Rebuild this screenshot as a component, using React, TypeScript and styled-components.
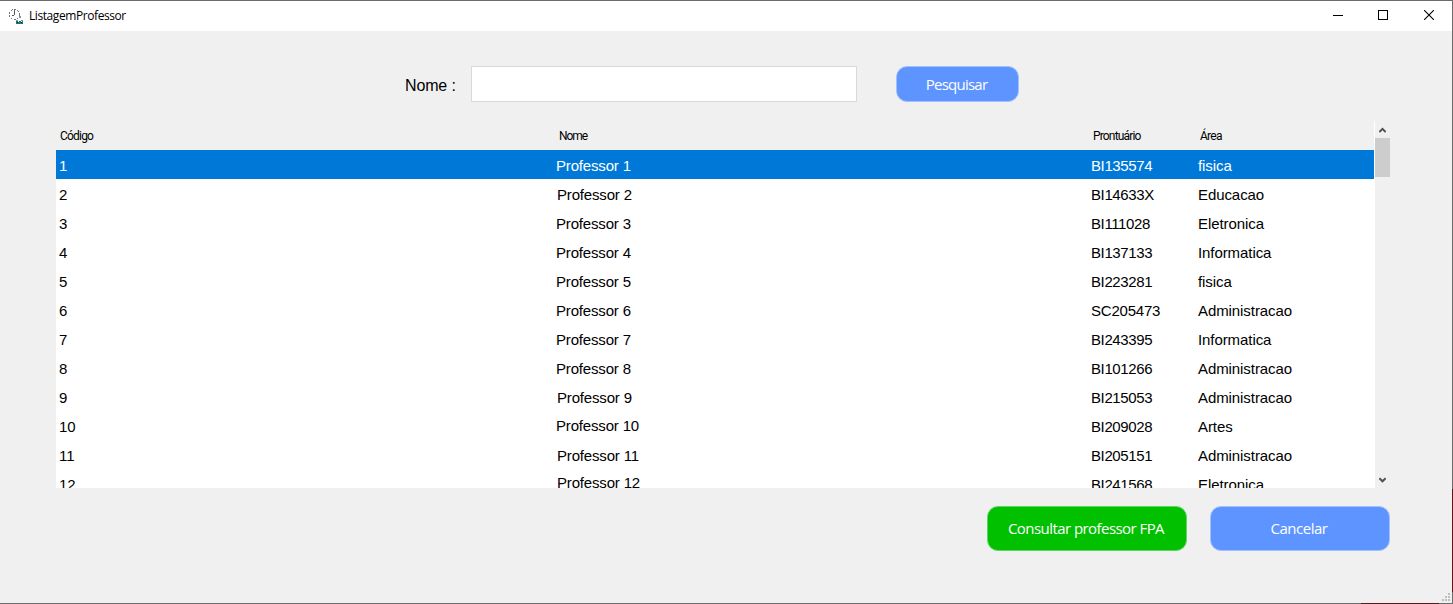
import React from "react";
import styled, { createGlobalStyle } from "styled-components";

const Global = createGlobalStyle`
  *, *::before, *::after { box-sizing: border-box; }
  body { margin: 0; background: #f0f0f0; overflow: hidden; }
  button, input { margin: 0; font: inherit; }
`;

const Window = styled.div`
  position: relative;
  width: 1453px;
  height: 604px;
  display: flex;
  flex-direction: column;
  background: #f0f0f0;
  border: 0 solid #6b6b6b;
  border-width: 1px 1px 1px 0;
  color: #000;
  font-family: "Liberation Sans", Arial, sans-serif;
`;

const EdgeTint = styled.div<{ $side: "right" | "bottom" }>`
  position: absolute;
  background: #5f1420;
  ${(p) =>
    p.$side === "right"
      ? "right: -1px; bottom: 11px; width: 1px; height: 103px;"
      : "right: 13px; bottom: -1px; width: 78px; height: 1px;"}
`;

const TitleBar = styled.header`
  height: 30px;
  flex: none;
  display: flex;
  align-items: center;
  padding-left: 8px;
  background: #fff;
`;

const Title = styled.span`
  flex: 1;
  margin-left: 5px;
  font: 12px/16px "Open Sans", "Noto Sans", sans-serif;
  letter-spacing: -0.42px;
`;

const CaptionButton = styled.button<{ $width: number }>`
  width: ${(p) => p.$width}px;
  height: 30px;
  padding: 0 0 2px;
  display: flex;
  align-items: center;
  justify-content: center;
  border: 0;
  background: transparent;
  svg { display: block; }
`;

const SearchBar = styled.div`
  height: 36px;
  flex: none;
  display: flex;
  align-items: center;
  margin: 35px 0 0 405px;
`;

const SearchLabel = styled.label`
  width: 66px;
  padding-top: 4px;
  font-size: 16px;
  line-height: 18px;
  letter-spacing: -0.15px;
`;

const SearchInput = styled.input`
  width: 386px;
  height: 36px;
  margin-right: 39px;
  border: 1px solid #d5dadf;
  border-radius: 0;
  background: #fff;
  outline: 0;
`;

const ActionButton = styled.button<{ $width: number; $height: number; $green?: boolean; $spacing: number }>`
  width: ${(p) => p.$width}px;
  height: ${(p) => p.$height}px;
  flex: none;
  padding: 0 2px 1px 0;
  border: 1px solid ${(p) => (p.$green ? "#5fd65f" : "#a3c1fb")};
  border-radius: 11px;
  background: ${(p) => (p.$green ? "#00c000" : "#5e94ff")};
  color: #fff;
  font: 400 15px/20px "Open Sans", "Noto Sans", sans-serif;
  letter-spacing: ${(p) => p.$spacing}px;
  white-space: nowrap;
`;

const Listing = styled.div`
  width: 1334px;
  height: 367px;
  flex: none;
  display: flex;
  margin: 19px 0 0 56px;
`;

const Grid = styled.div`
  width: 1319px;
  display: flex;
  flex-direction: column;
  border-right: 1px solid #fff;
`;

const columns = "500px 535px 107px 1fr";

const HeadRow = styled.div`
  height: 29px;
  flex: none;
  display: grid;
  grid-template-columns: ${columns};
  align-items: center;
`;

const HeadCell = styled.span<{ $indent: number; $spacing: number }>`
  padding: 1px 0 0 ${(p) => p.$indent}px;
  font-family: Roboto, "Liberation Sans", sans-serif;
  font-size: 12px;
  line-height: 14px;
  letter-spacing: ${(p) => p.$spacing}px;
`;

const Rows = styled.div`
  flex: 1;
  min-height: 0;
  overflow: hidden;
  background: #fff;
`;

const Row = styled.div<{ $selected: boolean }>`
  height: 29px;
  display: grid;
  grid-template-columns: ${columns};
  background: ${(p) => (p.$selected ? "#0078d7" : "#fff")};
  color: ${(p) => (p.$selected ? "#fff" : "#000")};
  font-size: 15px;
  line-height: 17px;
`;

const Cell = styled.span<{ $indent?: number; $raise?: number; $spacing?: number }>`
  padding-left: ${(p) => p.$indent ?? 0}px;
  padding-top: ${(p) => 7 - (p.$raise ?? 0)}px;
  letter-spacing: ${(p) => p.$spacing ?? 0}px;
  white-space: nowrap;
`;

const ScrollBar = styled.div`
  width: 15px;
  display: flex;
  flex-direction: column;
  background: #f0f0f0;
`;

const ScrollArrow = styled.div`
  height: 17px;
  display: flex;
  align-items: center;
  justify-content: center;
  svg { display: block; }
`;

const ScrollThumb = styled.div`
  height: 39px;
  margin-bottom: auto;
  background: #cdcdcd;
`;

const Footer = styled.footer`
  width: 1390px;
  display: flex;
  justify-content: flex-end;
  gap: 23px;
  margin-top: 18px;
`;

const GripBar = styled.div`
  display: flex;
  justify-content: flex-end;
  margin-top: auto;
  padding: 0 2px 2px 0;
  svg { display: block; }
`;

interface Professor {
  name: string;
  record: string;
  area: string;
  inset?: number;
  raise?: number;
}

const professors: Professor[] = [
  { name: "Professor 1", record: "BI135574", area: "fisica" },
  { name: "Professor 2", record: "BI14633X", area: "Educacao", inset: 1 },
  { name: "Professor 3", record: "BI111028", area: "Eletronica" },
  { name: "Professor 4", record: "BI137133", area: "Informatica" },
  { name: "Professor 5", record: "BI223281", area: "fisica" },
  { name: "Professor 6", record: "SC205473", area: "Administracao" },
  { name: "Professor 7", record: "BI243395", area: "Informatica" },
  { name: "Professor 8", record: "BI101266", area: "Administracao" },
  { name: "Professor 9", record: "BI215053", area: "Administracao", inset: 1 },
  { name: "Professor 10", record: "BI209028", area: "Artes", raise: 1 },
  { name: "Professor 11", record: "BI205151", area: "Administracao", inset: 1 },
  { name: "Professor 12", record: "BI241568", area: "Eletronica", inset: 1, raise: 2 },
];

const AppIcon = () => (
  <svg width="16" height="16" viewBox="0 0 16 16" fill="none" shapeRendering="crispEdges">
    <circle cx="6.5" cy="6.5" r="5" stroke="#6b7980" strokeDasharray="2 1.2" />
    <path d="M6.5 2v5M6 7.5H3.500" stroke="#4d5a62" />
    <path d="M11 8h2v2h-2zM8 12h2v1H8zM13 12h2v1h-2z" fill="#87949b" />
    <path d="M8 13h2v1h1v-1h2v1h1v-1h1v3H8z" fill="#1c7774" />
    <path d="M9 14h1v1H9zM13 14h1v1h-1z" fill="#082f34" />
  </svg>
);

const Chevron = ({ down = false }: { down?: boolean }) => (
  <svg width="7" height="7" viewBox="0 0 7 7">
    <path d={down ? "M.3 2.100 3.500 5.300 6.700 2.100" : "M.3 6 3.500 2.800 6.700 6"} fill="none" stroke="#505050" strokeWidth="2" />
  </svg>
);

const dots = [[6, 0], [3, 3], [6, 3], [0, 6], [3, 6], [6, 6]];

export default function App() {
  return (
    <>
      <Global />
      <Window>
        <TitleBar>
          <AppIcon />
          <Title>ListagemProfessor</Title>
          <CaptionButton $width={44} aria-label="Minimizar">
            <svg width="10" height="10" shapeRendering="crispEdges"><path d="M0 5.500h10" stroke="#000" /></svg>
          </CaptionButton>
          <CaptionButton $width={46} aria-label="Maximizar">
            <svg width="10" height="10" shapeRendering="crispEdges"><path d="M.5.5h9v9h-9z" fill="none" stroke="#000" /></svg>
          </CaptionButton>
          <CaptionButton $width={46} aria-label="Fechar">
            <svg width="10" height="10"><path d="m0 0 10 10M10 0 0 10" stroke="#000" strokeWidth="1.100" /></svg>
          </CaptionButton>
        </TitleBar>
        <SearchBar>
          <SearchLabel htmlFor="nome">Nome :</SearchLabel>
          <SearchInput id="nome" />
          <ActionButton $width={123} $height={36} $spacing={-0.75}>Pesquisar</ActionButton>
        </SearchBar>
        <Listing>
          <Grid>
            <HeadRow>
              <HeadCell $indent={4} $spacing={-0.8}>Código</HeadCell>
              <HeadCell $indent={3} $spacing={-1.1}>Nome</HeadCell>
              <HeadCell $indent={2} $spacing={-0.83}>Prontuário</HeadCell>
              <HeadCell $indent={2} $spacing={-0.75}>Área</HeadCell>
            </HeadRow>
            <Rows>
              {professors.map((p, i) => (
                <Row key={p.record} $selected={i === 0}>
                  <Cell $indent={3}>{i + 1}</Cell>
                  <Cell $indent={p.inset} $raise={p.raise} $spacing={-0.17}>{p.name}</Cell>
                  <Cell $spacing={p.record.startsWith("SC") ? -0.22 : -0.38}>{p.record}</Cell>
                  <Cell $spacing={-0.08}>{p.area}</Cell>
                </Row>
              ))}
            </Rows>
          </Grid>
          <ScrollBar>
            <ScrollArrow><Chevron /></ScrollArrow>
            <ScrollThumb />
            <ScrollArrow><Chevron down /></ScrollArrow>
          </ScrollBar>
        </Listing>
        <Footer>
          <ActionButton $width={200} $height={45} $green $spacing={-0.56}>Consultar professor FPA</ActionButton>
          <ActionButton $width={180} $height={45} $spacing={-0.5}>Cancelar</ActionButton>
        </Footer>
        <GripBar>
          <svg width="8" height="8" shapeRendering="crispEdges">
            {dots.map(([x, y]) => <rect key={`${x}-${y}`} x={x} y={y} width="2" height="2" fill="#bfbfbf" />)}
          </svg>
        </GripBar>
        <EdgeTint $side="right" />
        <EdgeTint $side="bottom" />
      </Window>
    </>
  );
}
